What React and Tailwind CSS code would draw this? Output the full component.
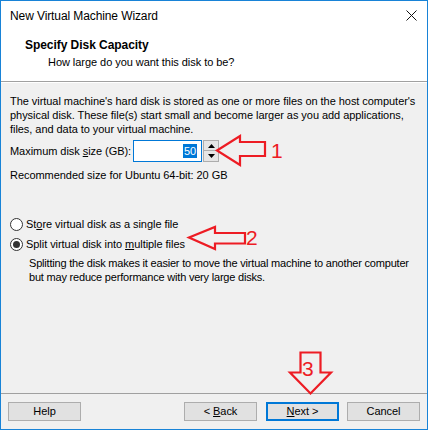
import React from "react";

const font = { fontFamily: '"Liberation Sans", Arial, sans-serif' };

function Btn({ children, primary, className = "" }) {
  return (
    <div
      className={
        "h-[19px] w-[73px] flex items-center justify-center text-[11px] text-black bg-[#e1e1e1] " +
        (primary ? "border-2 border-[#0078d7] " : "border border-[#adadad] ") +
        className
      }
    >
      {children}
    </div>
  );
}

function Radio({ checked }) {
  return (
    <div className="w-[13px] h-[13px] rounded-full border border-[#333] bg-white flex items-center justify-center">
      {checked && <div className="w-[7px] h-[7px] rounded-full bg-[#333]" />}
    </div>
  );
}

export default function App() {
  return (
    <div
      className="relative w-[428px] h-[430px] border border-[#1883d7] bg-[#f0f0f0] flex flex-col overflow-hidden text-black text-[11px] tracking-[-0.05px]"
      style={font}
    >
      {/* Title bar */}
      <div className="h-[29px] bg-white flex items-center justify-between pl-[9px] pr-[9px] shrink-0">
        <span className="text-[12px] tracking-[-0.1px]">New Virtual Machine Wizard</span>
        <svg width="11" height="11" viewBox="0 0 11 11" className="mr-[1px]">
          <path d="M0.5 0.5 L10.5 10.5 M10.5 0.5 L0.5 10.5" stroke="#111" strokeWidth="1" />
        </svg>
      </div>
      {/* Header */}
      <div className="h-[51px] bg-white shrink-0 pl-[24px] pt-[7px]">
        <div className="text-[12px] font-bold leading-[16px]">Specify Disk Capacity</div>
        <div className="leading-[16px] pl-[23px] pt-[1px]">How large do you want this disk to be?</div>
      </div>
      <div className="h-px bg-[#a0a0a0] shrink-0" />
      <div className="h-px bg-white shrink-0" />
      {/* Body */}
      <div className="flex-1 px-[9px] pt-[11px] leading-[14px]">
        <p className="whitespace-nowrap">
          The virtual machine's hard disk is stored as one or more files on the host computer's
          <br />
          physical disk. These file(s) start small and become larger as you add applications,
          <br />
          files, and data to your virtual machine.
        </p>
        <div className="flex items-center mt-[4px] h-[22px]">
          <span>
            Maximum disk <u>s</u>ize (GB):
          </span>
          <div className="ml-[2px] w-[69px] h-[22px] border border-[#0078d7] bg-white flex items-center justify-end pr-[4px]">
            <span className="bg-[#0078d7] text-white px-[1px] leading-[14px]">50</span>
          </div>
          <div className="ml-[1px] w-[16px] h-[22px] flex flex-col bg-[#f0f0f0]">
            <div className="h-[11px] border border-[#adadad] bg-[#e5e5e5] flex items-center justify-center">
              <svg width="7" height="4" viewBox="0 0 7 4"><path d="M3.5 0 L7 4 L0 4 Z" fill="#000" /></svg>
            </div>
            <div className="h-[11px] border border-t-0 border-[#adadad] bg-[#e5e5e5] flex items-center justify-center">
              <svg width="7" height="4" viewBox="0 0 7 4"><path d="M0 0 L7 0 L3.5 4 Z" fill="#000" /></svg>
            </div>
          </div>
        </div>
        <div className="mt-[6px]">Recommended size for Ubuntu 64-bit: 20 GB</div>

        <div className="mt-[33px] flex items-center gap-[3px] h-[18px]">
          <Radio />
          <span>
            St<u>o</u>re virtual disk as a single file
          </span>
        </div>
        <div className="mt-[2px] flex items-center gap-[3px] h-[18px]">
          <Radio checked />
          <span>
            Split virtual disk into <u>m</u>ultiple files
          </span>
        </div>
        <p className="pl-[19px] mt-[3px] whitespace-nowrap tracking-[-0.2px]">
          Splitting the disk makes it easier to move the virtual machine to another computer
          <br />
          but may reduce performance with very large disks.
        </p>
      </div>
      {/* Footer */}
      <div className="h-px bg-[#a0a0a0] shrink-0" />
      <div className="h-[35px] shrink-0 flex items-start pt-[8px] px-[7px]">
        <Btn>Help</Btn>
        <div className="flex-1" />
        <Btn>
          &lt; <u className="ml-[3px]">B</u>ack
        </Btn>
        <Btn primary className="ml-[9px]">
          <u>N</u>ext &gt;
        </Btn>
        <Btn className="ml-[8px]">Cancel</Btn>
      </div>

      {/* Annotations */}
      <svg
        className="absolute left-[-1px] top-[-1px] pointer-events-none"
        width="428"
        height="430"
        viewBox="0 0 428 430"
      >
        <g fill="none" stroke="#ed1c24" strokeWidth="2.2" strokeLinejoin="miter">
          <path d="M217 150.5 L240 136 L240 142 L265 142 L265 156 L240 156 L240 165 Z" />
          <path d="M189 237.5 L215 227 L215 233 L245 233 L245 243.5 L215 243.5 L215 249 Z" />
          <path d="M300.5 352.5 L320.5 352.5 L320.5 372.5 L331 372.5 L310.5 393.5 L290 372.5 L300.5 372.5 Z" />
        </g>
        <g fill="#ed1c24" style={font}>
          <text x="271" y="158" fontSize="21">1</text>
          <text x="246" y="245" fontSize="21">2</text>
          <text x="302" y="376" fontSize="21">3</text>
        </g>
      </svg>
    </div>
  );
}
